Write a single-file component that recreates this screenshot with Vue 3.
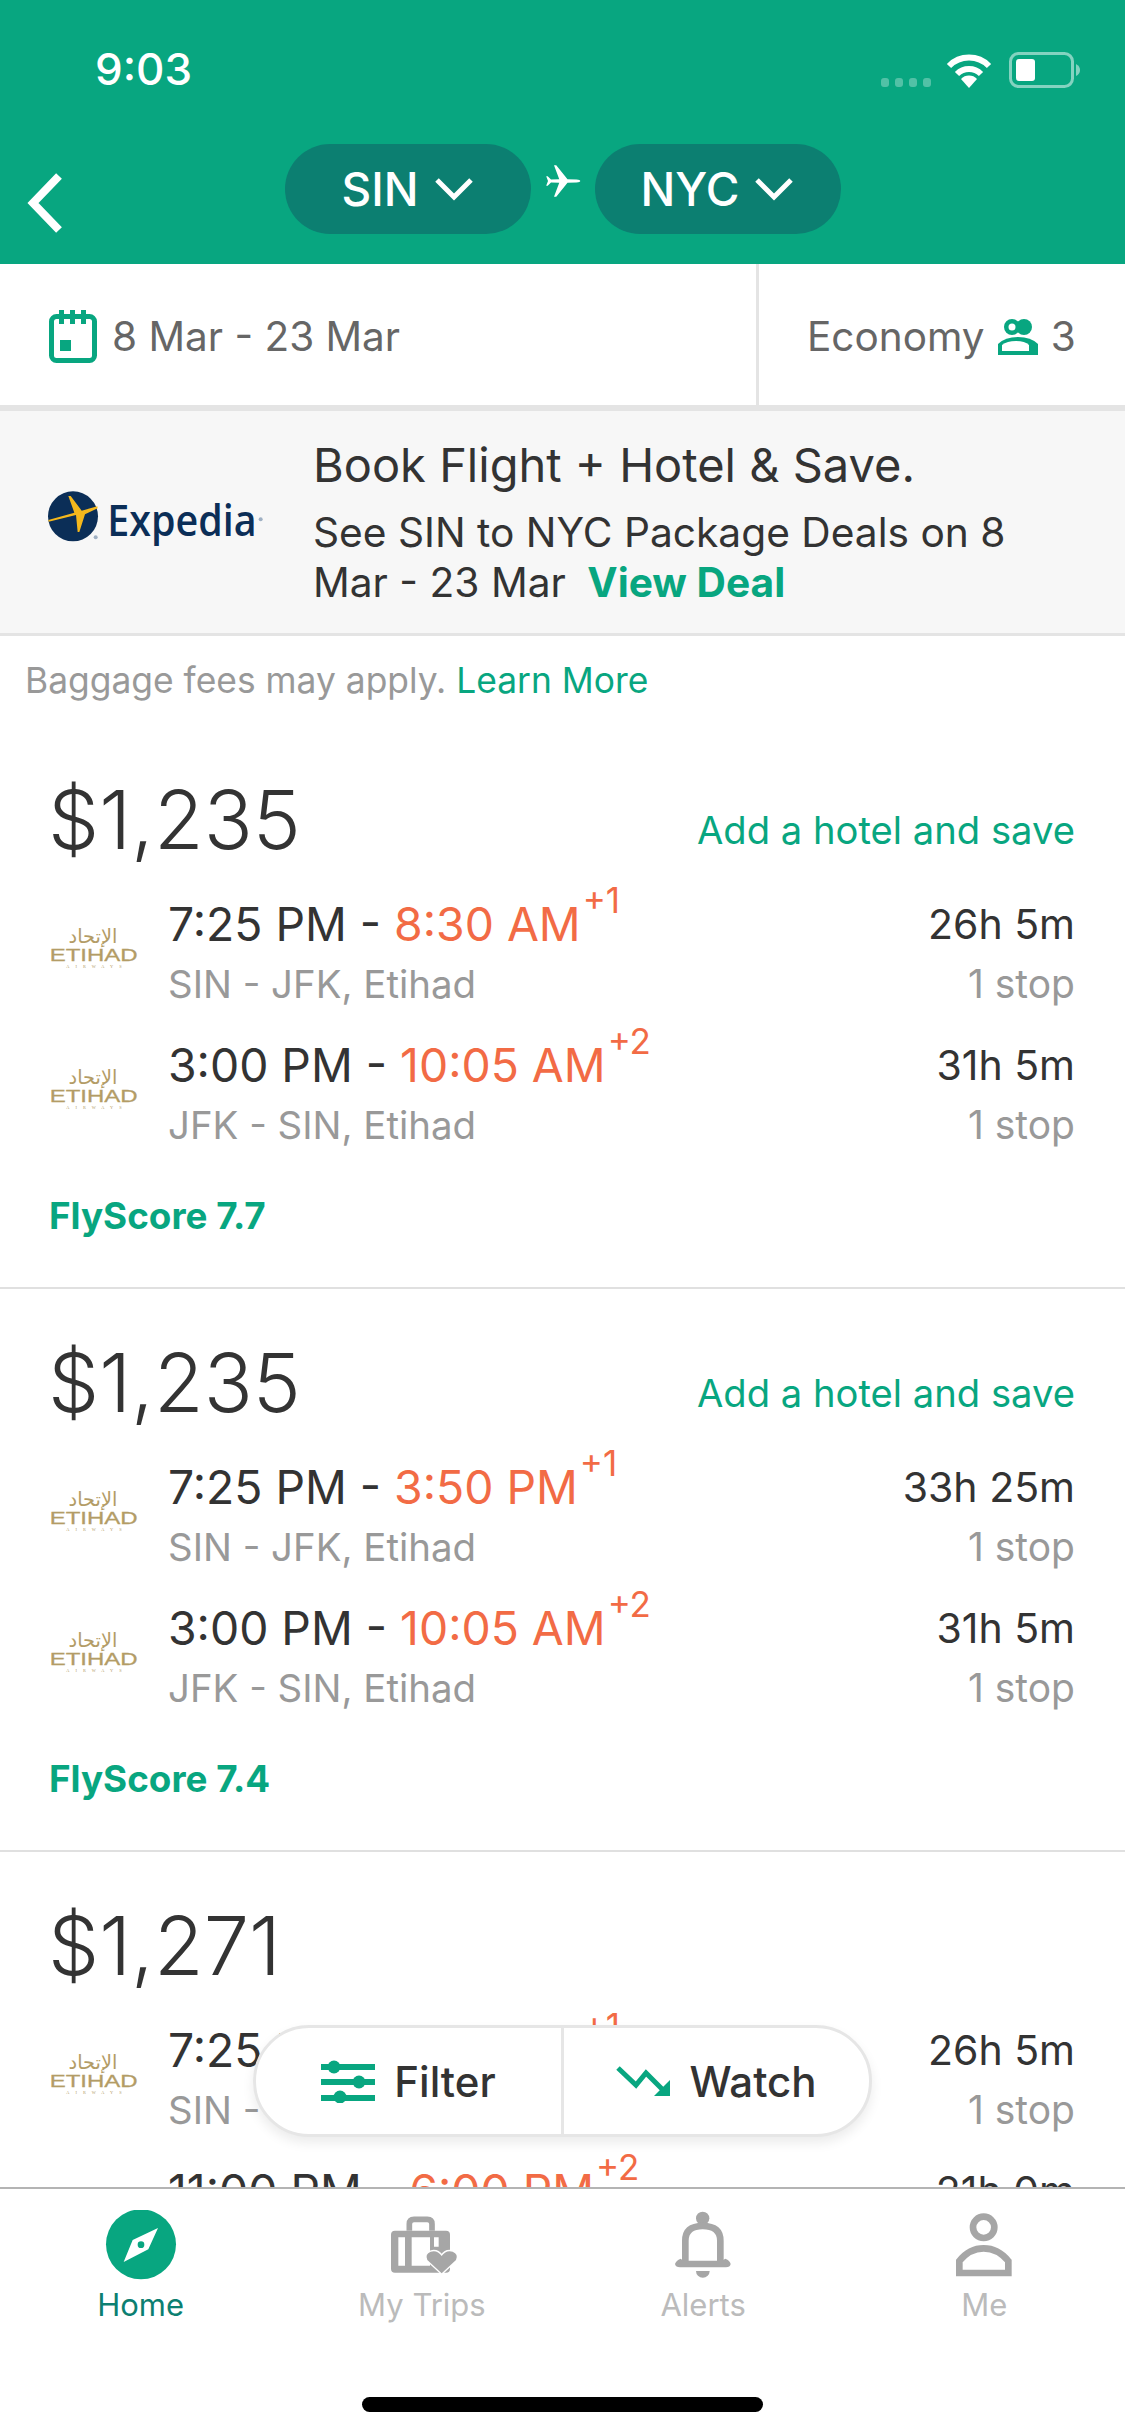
<script setup>
const cards = [
  {
    price: '$1,235',
    hotel: true,
    score: 'FlyScore 7.7',
    legs: [
      { dep: '7:25 PM', arr: '8:30 AM', plus: '+1', route: 'SIN - JFK, Etihad', dur: '26h 5m', stops: '1 stop' },
      { dep: '3:00 PM', arr: '10:05 AM', plus: '+2', route: 'JFK - SIN, Etihad', dur: '31h 5m', stops: '1 stop' }
    ]
  },
  {
    price: '$1,235',
    hotel: true,
    score: 'FlyScore 7.4',
    legs: [
      { dep: '7:25 PM', arr: '3:50 PM', plus: '+1', route: 'SIN - JFK, Etihad', dur: '33h 25m', stops: '1 stop' },
      { dep: '3:00 PM', arr: '10:05 AM', plus: '+2', route: 'JFK - SIN, Etihad', dur: '31h 5m', stops: '1 stop' }
    ]
  },
  {
    price: '$1,271',
    hotel: false,
    score: '',
    legs: [
      { dep: '7:25 PM', arr: '8:30 AM', plus: '+1', route: 'SIN - JFK, Etihad', dur: '26h 5m', stops: '1 stop' },
      { dep: '11:00 PM', arr: '6:00 PM', plus: '+2', route: 'JFK - SIN, Etihad', dur: '21h 0m', stops: '1 stop' }
    ]
  }
]
</script>

<template>
  <div class="screen">
    <header class="header">
      <div class="status">
        <span class="status__time">9:03</span>
        <div class="status__icons">
          <span class="signal"><i /><i /><i /><i /></span>
          <svg width="46" height="34" viewBox="0 0 46 34">
            <path d="M3 12 A28 28 0 0 1 43 12" fill="none" stroke="#fff" stroke-width="6" />
            <path d="M11 20 A17 17 0 0 1 35 20" fill="none" stroke="#fff" stroke-width="6" />
            <path d="M23 34 L15 25 A11 11 0 0 1 31 25 Z" fill="#fff" />
          </svg>
          <svg class="status__battery" width="72" height="36" viewBox="0 0 72 36">
            <rect x="1.500" y="1.500" width="62" height="33" rx="8" fill="none" stroke="#fff" stroke-opacity=".5" stroke-width="3" />
            <rect x="7" y="7" width="19" height="22" rx="3" fill="#fff" />
            <path d="M67 12 Q71 14 71 18 Q71 22 67 24 Z" fill="#fff" fill-opacity=".5" />
          </svg>
        </div>
      </div>
      <div class="nav">
        <svg class="nav__back" width="38" height="62" viewBox="0 0 38 62">
          <path d="M33 4 L7 31 L33 58" fill="none" stroke="#fff" stroke-width="8" />
        </svg>
        <div class="nav__route">
          <button class="airport" type="button">
            SIN
            <svg width="40" height="24" viewBox="0 0 40 24"><path d="M3 3 L20 20 L37 3" fill="none" stroke="#fff" stroke-width="5" /></svg>
          </button>
          <svg class="nav__plane" width="36" height="36" viewBox="0 0 24 24">
            <path d="M23.500 12 Q23.500 11.200 21 11 L15 10.800 L7.500 1.500 L6 1.500 L9.500 10.800 L4 11 L1.800 8.800 L.8 8.800 L2 12 L.8 15.200 L1.800 15.200 L4 13 L9.500 13.200 L6 22.500 L7.500 22.500 L15 13.200 L21 13 Q23.500 12.800 23.500 12 Z" fill="#fff" />
          </svg>
          <button class="airport" type="button">
            NYC
            <svg width="40" height="24" viewBox="0 0 40 24"><path d="M3 3 L20 20 L37 3" fill="none" stroke="#fff" stroke-width="5" /></svg>
          </button>
        </div>
        <span />
      </div>
    </header>

    <div class="search-bar">
      <div class="search-bar__dates">
        <svg width="50" height="54" viewBox="0 0 50 54">
          <rect x="3.500" y="6.500" width="43" height="44" rx="5" fill="none" stroke="#08a680" stroke-width="5" />
          <rect x="11" y="0" width="5" height="14" fill="#08a680" />
          <rect x="22" y="0" width="5" height="14" fill="#08a680" />
          <rect x="33" y="0" width="5" height="14" fill="#08a680" />
          <rect x="12" y="30" width="11" height="11" fill="#08a680" />
        </svg>
        <span>8 Mar - 23 Mar</span>
      </div>
      <div class="search-bar__cabin">
        <span>Economy</span>
        <svg width="40" height="36" viewBox="0 0 40 36">
          <circle cx="26" cy="8" r="8" fill="#08a680" />
          <circle cx="14" cy="8" r="8" fill="#08a680" />
          <circle cx="14" cy="8" r="3.500" fill="#fff" />
          <path d="M0 36 V25 Q7 18 20 18 Q33 18 40 25 V36 Z" fill="#08a680" />
          <path d="M4 32 V26 Q9 22 18 22 Q27 22 31 26 V32 Z" fill="#fff" />
        </svg>
        <span>3</span>
      </div>
    </div>

    <section class="promo">
      <svg class="promo__logo" width="216" height="90" viewBox="54 42 648 270">
        <circle cx="129" cy="139" r="75" fill="#0b2e57" />
        <path d="M55 150 L133 128 L115 78 L122 78 L155 122 L202 109 L203 115 L165 133 L148 186 L143 186 L138 135 L56 155 Z" fill="#f5b81c" />
        <text class="promo__logo-text" x="232" y="197" font-size="132" textLength="448" lengthAdjust="spacingAndGlyphs">Expedia</text>
        <circle cx="197" cy="202" r="6" fill="#9fb0c3" />
        <circle cx="692" cy="148" r="6" fill="#9fb0c3" />
      </svg>
      <div class="promo__text">
        <h2 class="promo__title">Book Flight + Hotel &amp; Save.</h2>
        <p class="promo__desc">See SIN to NYC Package Deals on 8 Mar - 23 Mar <a class="promo__link">View Deal</a></p>
      </div>
    </section>

    <div class="results">
      <p class="note">Baggage fees may apply. <a class="note__link">Learn More</a></p>

      <article v-for="(card, i) in cards" :key="i" class="card">
        <div class="card__top">
          <span class="card__price">{{ card.price }}</span>
          <span v-if="card.hotel" class="card__hotel">Add a hotel and save</span>
        </div>
        <div v-for="(leg, j) in card.legs" :key="j" class="leg">
          <svg class="leg__logo" width="90" height="50" viewBox="56 60 270 150">
            <text class="leg__logo-ar" x="188" y="130" font-size="58" text-anchor="middle">الإتحاد</text>
            <text class="leg__logo-name" x="58" y="184" font-size="50" textLength="264" lengthAdjust="spacingAndGlyphs">ETIHAD</text>
            <text class="leg__logo-sub" x="108" y="204" font-size="13" textLength="166">AIRWAYS</text>
          </svg>
          <div class="leg__main">
            <div class="leg__time">{{ leg.dep }} - <span class="leg__arr">{{ leg.arr }}<sup class="leg__plus">{{ leg.plus }}</sup></span></div>
            <div class="leg__route">{{ leg.route }}</div>
          </div>
          <div class="leg__side">
            <div class="leg__dur">{{ leg.dur }}</div>
            <div class="leg__stops">{{ leg.stops }}</div>
          </div>
        </div>
        <div v-if="card.score" class="card__score">{{ card.score }}</div>
      </article>
    </div>

    <div class="float-bar">
      <button class="float-bar__btn" type="button">
        <svg width="54" height="44" viewBox="0 0 54 44">
          <rect x="0" y="5" width="54" height="6" fill="#08a680" />
          <rect x="0" y="20" width="54" height="6" fill="#08a680" />
          <rect x="0" y="36" width="54" height="6" fill="#08a680" />
          <circle cx="13" cy="8" r="6.500" fill="#08a680" />
          <circle cx="38" cy="23" r="6.500" fill="#08a680" />
          <circle cx="19" cy="38" r="6.500" fill="#08a680" />
        </svg>
        Filter
      </button>
      <button class="float-bar__btn" type="button">
        <svg width="54" height="32" viewBox="0 0 54 32">
          <path d="M2 3 L20 20 L30 8 L48 26" fill="none" stroke="#08a680" stroke-width="5" />
          <path d="M54 15 V31 H38 Z" fill="#08a680" />
        </svg>
        Watch
      </button>
    </div>

    <nav class="tabbar">
      <div class="tabbar__items">
        <div class="tab tab--active">
          <svg width="80" height="70" viewBox="30 30 240 210">
            <circle cx="150" cy="133" r="105" fill="#08a680" />
            <path fill-rule="evenodd" d="M201 84 L172 148 L98 186 L125 120 Z M150 124 A10 10 0 1 0 150 144 A10 10 0 1 0 150 124 Z" fill="#fff" />
          </svg>
          <span>Home</span>
        </div>
        <div class="tab">
          <svg width="80" height="70" viewBox="876 30 240 210">
            <path d="M958 92 V72 Q958 58 972 58 H1012 Q1026 58 1026 72 V92" fill="none" stroke="#a6a6a6" stroke-width="17" />
            <path fill-rule="evenodd" d="M915 92 H1068 Q1080 92 1080 104 V206 Q1080 218 1068 218 H915 Q903 218 903 206 V104 Q903 92 915 92 Z M925 112 V197 H945 V112 Z M965 112 V197 H1020 V112 Z M1032 112 V140 H1046 V112 Z" fill="#a6a6a6" />
            <path d="M1055 220 L1012 180 Q1004 162 1022 155 Q1042 149 1055 168 Q1068 149 1088 155 Q1106 162 1098 180 Z" fill="#a6a6a6" stroke="#fff" stroke-width="8" paint-order="stroke" />
          </svg>
          <span>My Trips</span>
        </div>
        <div class="tab">
          <svg width="80" height="70" viewBox="9 30 240 210">
            <circle cx="128" cy="55" r="20" fill="#a6a6a6" />
            <path d="M76 185 V122 Q76 78 128 78 Q181 78 181 122 V185" fill="none" stroke="#a6a6a6" stroke-width="20" />
            <path d="M45 192 Q48 182 62 176 L70 182 H186 L196 176 Q210 182 212 192 Q210 202 198 202 H60 Q47 202 45 192 Z" fill="#a6a6a6" />
            <path d="M108 213 H149 A20.500 20.500 0 0 1 108 213 Z" fill="#a6a6a6" />
          </svg>
          <span>Alerts</span>
        </div>
        <div class="tab">
          <svg width="80" height="70" viewBox="849 30 240 210">
            <circle cx="968" cy="82" r="32" fill="none" stroke="#a6a6a6" stroke-width="20" />
            <path d="M895 219 V183 Q925 145 968 145 Q1011 145 1042 183 V219 Z" fill="none" stroke="#a6a6a6" stroke-width="20" />
          </svg>
          <span>Me</span>
        </div>
      </div>
      <div class="home-indicator" />
    </nav>
  </div>
</template>

<style>
html,
body {
  margin: 0;
  background: #fff;
}
</style>

<style scoped>
.screen {
  position: relative;
  display: flex;
  flex-direction: column;
  width: 1125px;
  height: 2436px;
  overflow: hidden;
  background: #fff;
  color: #333;
  font-family: Inter, "Liberation Sans", sans-serif;
}

.header {
  flex-shrink: 0;
  height: 264px;
  background: #08a680;
  color: #fff;
}

.status {
  display: flex;
  justify-content: space-between;
  align-items: flex-start;
  box-sizing: border-box;
  height: 144px;
  padding: 49px 44px 0 95px;
}

.status__time {
  font-size: 44px;
  font-weight: 500;
  line-height: 40px;
}

.status__icons {
  display: flex;
  align-items: flex-end;
  gap: 15px;
  margin-top: 3px;
}

.status__battery {
  margin-left: 2px;
}

.signal {
  display: flex;
  gap: 6px;
  margin-bottom: 1px;
}

.signal i {
  width: 8px;
  height: 9px;
  border-radius: 3px;
  background: rgba(255, 255, 255, 0.3);
}

.nav {
  display: grid;
  grid-template-columns: 1fr auto 1fr;
}

.nav__back {
  align-self: start;
  margin: 28px 0 0 26px;
}

.nav__route {
  display: flex;
  align-items: center;
  gap: 14px;
}

.nav__plane {
  margin-top: -16px;
}

.airport {
  display: flex;
  align-items: center;
  justify-content: center;
  gap: 15px;
  box-sizing: border-box;
  width: 246px;
  height: 90px;
  padding: 0;
  border: 0;
  border-radius: 45px;
  background: #0c7f71;
  color: #fff;
  font-family: inherit;
  font-size: 46px;
  font-weight: 500;
}

.search-bar {
  display: flex;
  flex-shrink: 0;
  box-sizing: border-box;
  height: 147px;
  border-bottom: 6px solid #e4e4e4;
  color: #666;
  font-size: 40.500px;
}

.search-bar__dates {
  display: flex;
  align-items: center;
  gap: 14px;
  box-sizing: border-box;
  width: 759px;
  padding: 4px 0 0 48px;
  border-right: 3px solid #e4e4e4;
}

.search-bar__cabin {
  display: flex;
  align-items: center;
  flex: 1;
  padding: 4px 0 0 48px;
  gap: 13px;
}

.promo {
  display: flex;
  align-items: center;
  flex-shrink: 0;
  box-sizing: border-box;
  height: 225px;
  border-bottom: 3px solid #e4e4e4;
  background: #f7f7f7;
}

.promo__logo {
  flex-shrink: 0;
  margin: 14px 49px 0 48px;
}

.promo__logo-text {
  fill: #0b2e57;
  font-family: "Open Sans", "Liberation Sans", sans-serif;
  font-weight: 600;
}

.promo__text {
  width: 762px;
  padding-top: 1px;
}

.promo__title {
  margin: 0 0 15px;
  font-size: 47px;
  font-weight: 400;
  line-height: 56px;
}

.promo__desc {
  margin: 0;
  font-size: 40.700px;
  line-height: 50px;
}

.promo__link {
  margin-left: 10px;
  color: #08a680;
  font-weight: 700;
}

.results {
  flex: 1;
  min-height: 0;
  overflow: hidden;
}

.note {
  box-sizing: border-box;
  height: 90px;
  margin: 0;
  padding: 25px 25px 0;
  color: #999;
  font-size: 35.400px;
  line-height: 40px;
}

.note__link {
  color: #08a680;
}

.card {
  box-sizing: border-box;
  height: 563px;
  padding: 56px 50px 0 49px;
  border-bottom: 2px solid #e0e0e0;
}

.card__top {
  display: flex;
  align-items: center;
  justify-content: space-between;
  height: 76px;
  margin-bottom: 36px;
}

.card__price {
  margin-left: -1px;
  font-size: 81px;
  font-weight: 300;
  line-height: 76px;
}

.card__hotel {
  margin-top: 20px;
  color: #08a680;
  font-size: 38.200px;
}

.leg {
  display: flex;
  margin-bottom: 21px;
}

.leg__logo {
  flex-shrink: 0;
  margin: 26px 29px 0 0;
}

.leg__logo-ar {
  fill: #b39c66;
  font-family: "DejaVu Sans", sans-serif;
}

.leg__logo-name {
  fill: #b39c66;
  stroke: #b39c66;
  stroke-width: 0.8;
  font-family: "Liberation Sans", sans-serif;
}

.leg__logo-sub {
  fill: #b39c66;
  font-family: "Liberation Serif", serif;
}

.leg__main {
  flex: 1;
}

.leg__time {
  font-size: 46.300px;
  line-height: 60px;
}

.leg__arr {
  color: #f26b45;
}

.leg__plus {
  margin-left: 2px;
  font-size: 35px;
  line-height: 0;
  vertical-align: 28px;
}

.leg__route {
  color: #999;
  font-size: 38.400px;
  line-height: 60px;
}

.leg__stops {
  color: #999;
  font-size: 39px;
  line-height: 60px;
}

.leg__side {
  text-align: right;
}

.leg__dur {
  font-size: 41px;
  line-height: 60px;
}

.card__score {
  margin-top: 41px;
  color: #08a680;
  font-size: 36.800px;
  font-weight: 700;
  line-height: 40px;
}

.float-bar {
  position: absolute;
  top: 2025px;
  left: 253px;
  display: flex;
  box-sizing: border-box;
  width: 619px;
  height: 112px;
  border: 3px solid #e6e6e6;
  border-radius: 56px;
  background: #fff;
  box-shadow: 0 6px 12px rgba(0, 0, 0, 0.08);
}

.float-bar__btn {
  display: flex;
  align-items: center;
  justify-content: center;
  flex: 1;
  gap: 19px;
  padding: 0;
  border: 0;
  background: none;
  color: #333;
  font-family: inherit;
  font-size: 42px;
  font-weight: 500;
}

.float-bar__btn + .float-bar__btn {
  border-left: 3px solid #e6e6e6;
}

.tabbar {
  position: relative;
  flex-shrink: 0;
  box-sizing: border-box;
  height: 249px;
  border-top: 2px solid #b4b4b4;
  background: #fff;
}

.tabbar__items {
  display: grid;
  grid-template-columns: repeat(4, 1fr);
  padding-top: 21px;
}

.tab {
  display: flex;
  flex-direction: column;
  align-items: center;
  gap: 7px;
  color: #bbb;
  font-size: 31px;
  line-height: 36px;
}

.tab--active {
  color: #0c7f71;
}

.home-indicator {
  width: 401px;
  height: 15px;
  margin: 74px auto 0;
  border-radius: 8px;
  background: #000;
}
</style>
